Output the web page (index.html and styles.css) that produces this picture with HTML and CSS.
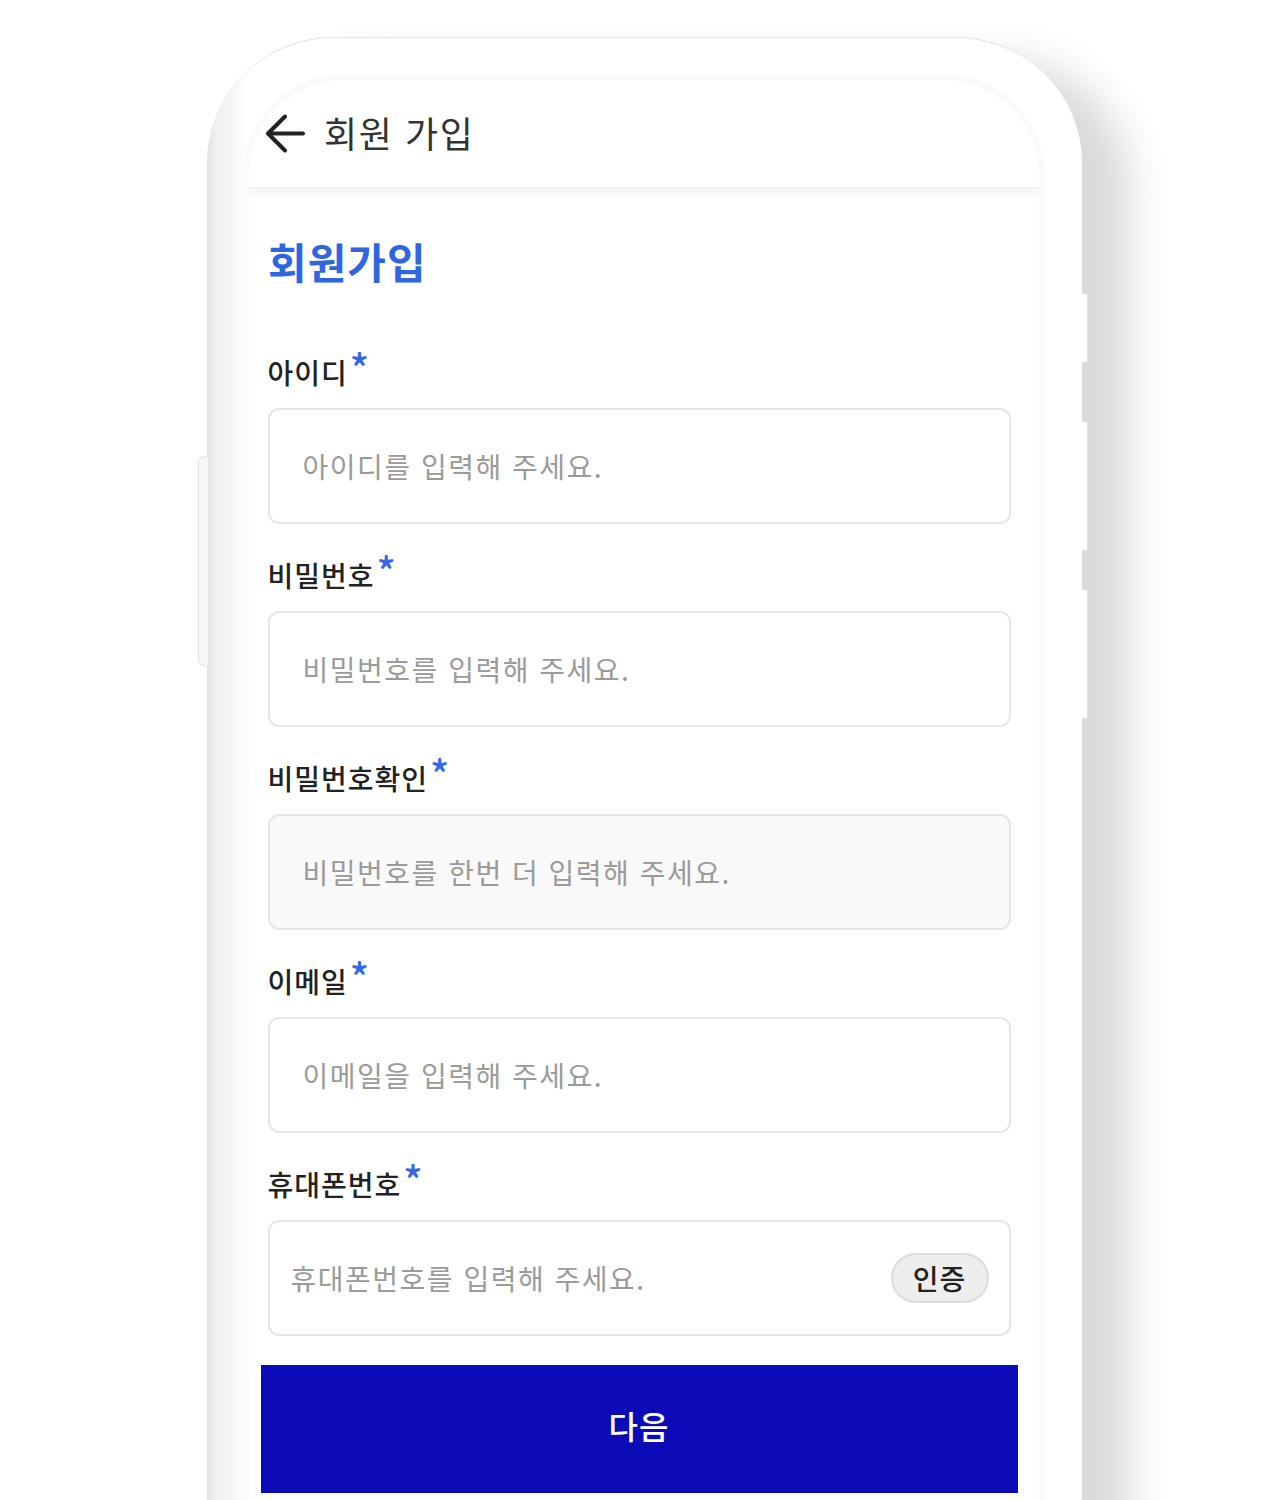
FILE: index.html
```html
<!DOCTYPE html>
<html lang="ko">
<head>
    <meta charset="UTF-8">
    <meta name="viewport" content="width=device-width, initial-scale=1.0">
    <title>회원 가입</title>
    <link rel="stylesheet" href="styles.css">
</head>
<body>
    <div class="phone">
        <span class="side-btn left-btn"></span>
        <span class="side-btn right-btn btn-1"></span>
        <span class="side-btn right-btn btn-2"></span>
        <span class="side-btn right-btn btn-3"></span>

        <div class="screen">
            <header class="app-header">
                <button class="back-btn" aria-label="뒤로">
                    <svg width="40" height="40" viewBox="0 0 40 40" fill="none" stroke="#222" stroke-width="4" stroke-linecap="round" stroke-linejoin="round">
                        <path d="M37 19.5H3"/>
                        <path d="M19 2.5L2 19.5L19 36.5"/>
                    </svg>
                </button>
                <h1>회원 가입</h1>
            </header>

            <main class="content">
                <h2 class="page-title">회원가입</h2>

                <form class="signup-form">
                    <div class="field">
                        <label for="userid">아이디<span class="req">*</span></label>
                        <input type="text" id="userid" class="text-input" placeholder="아이디를 입력해 주세요.">
                    </div>
                    <div class="field">
                        <label for="pw">비밀번호<span class="req">*</span></label>
                        <input type="password" id="pw" class="text-input" placeholder="비밀번호를 입력해 주세요.">
                    </div>
                    <div class="field">
                        <label for="pw2">비밀번호확인<span class="req">*</span></label>
                        <input type="password" id="pw2" class="text-input filled" placeholder="비밀번호를 한번 더 입력해 주세요.">
                    </div>
                    <div class="field">
                        <label for="email">이메일<span class="req">*</span></label>
                        <input type="email" id="email" class="text-input" placeholder="이메일을 입력해 주세요.">
                    </div>
                    <div class="field">
                        <label for="phone">휴대폰번호<span class="req">*</span></label>
                        <div class="input-group">
                            <input type="tel" id="phone" placeholder="휴대폰번호를 입력해 주세요.">
                            <button type="button" class="verify-btn">인증</button>
                        </div>
                    </div>
                    <button type="button" class="next-btn">다음</button>
                </form>
            </main>
        </div>
    </div>
</body>
</html>
```

FILE: styles.css
```css
* {
    box-sizing: border-box;
    margin: 0;
    padding: 0;
}

body {
    font-family: "Noto Sans CJK KR", "Noto Sans", sans-serif;
    background-color: #fff;
    color: #222;
    overflow: hidden;
    height: 1500px;
}

.phone {
    position: relative;
    width: 875px;
    height: 1520px;
    margin: 37px 0 0 207px;
    padding: 42px 0 0 42px;
    border-radius: 126px 126px 0 0;
    border-top: 1px solid #e2e2e2;
    background: linear-gradient(to right, #e2e2e2 0, #efefef 8px, #f6f6f6 26px, #fff 40px, #fff 100%);
    box-shadow: 48px 24px 40px rgba(0, 0, 0, 0.15);
}

.side-btn {
    position: absolute;
    background-color: #f6f6f6;
    border: 1px solid #e4e4e4;
}

.left-btn {
    left: -9px;
    top: 418px;
    width: 10px;
    height: 210px;
    border-radius: 6px 0 0 6px;
    border-right: none;
}

.right-btn {
    right: -6px;
    width: 6px;
    border-radius: 0 3px 3px 0;
    border-left: none;
    background-color: #fff;
}

.btn-1 {
    top: 255px;
    height: 70px;
}

.btn-2 {
    top: 383px;
    height: 130px;
}

.btn-3 {
    top: 551px;
    height: 130px;
}

.screen {
    width: 790px;
    height: 1500px;
    border-radius: 96px 96px 0 0;
    background-color: #fff;
    box-shadow: 0 0 0 6px #fafafa;
    overflow: hidden;
}

.app-header {
    display: flex;
    align-items: center;
    height: 108px;
    padding-left: 17px;
    background-color: #fff;
    box-shadow: 0 4px 8px rgba(0, 0, 0, 0.07);
    border-bottom: 1px solid #eee;
}

.back-btn {
    display: flex;
    border: none;
    background: none;
    margin-right: 18px;
}

.app-header h1 {
    font-size: 36px;
    font-weight: 400;
    color: #333;
    line-height: 1;
    letter-spacing: 1.6px;
    margin-top: -4px;
}

.content {
    padding: 48px 0 0;
}

.page-title {
    margin-left: 19px;
    font-size: 42px;
    line-height: 50px;
    font-weight: 700;
    letter-spacing: 1px;
    color: #2f66df;
}

.signup-form {
    display: flex;
    flex-direction: column;
    align-items: center;
    margin-top: 68px;
    padding-right: 10px;
}

.field {
    width: 743px;
    margin-bottom: 33px;
}

.field label {
    display: block;
    height: 36px;
    margin-bottom: 18px;
    font-size: 28px;
    line-height: 36px;
    font-weight: 500;
    letter-spacing: 1px;
    color: #222;
}

.req {
    display: inline-block;
    margin-left: 2px;
    color: #3568e4;
    font-size: 40px;
    line-height: 1;
    vertical-align: top;
    position: relative;
    top: -7px;
}

.text-input,
.input-group {
    width: 100%;
    height: 116px;
    border: 2px solid #e6e6e6;
    border-radius: 11px;
    background-color: #fff;
}

.text-input {
    padding-left: 33px;
    font-family: inherit;
    font-size: 28px;
    letter-spacing: 1.5px;
    color: #222;
    outline: none;
}

.text-input.filled {
    background-color: #f9f9f9;
}

.input-group {
    display: flex;
    align-items: center;
    padding: 0 20px 0 21px;
}

.input-group input {
    flex: 1;
    border: none;
    outline: none;
    background: none;
    font-family: inherit;
    font-size: 28px;
    letter-spacing: 1.5px;
}

::placeholder {
    color: #9a9a9a;
    opacity: 1;
}

.verify-btn {
    width: 98px;
    height: 50px;
    border: 2px solid #dcdcdc;
    border-radius: 25px;
    background-color: #eee;
    font-family: inherit;
    font-size: 28px;
    font-weight: 500;
    letter-spacing: 1px;
    color: #222;
}

.next-btn {
    width: 757px;
    height: 128px;
    margin-top: -4px;
    padding-bottom: 8px;
    border: none;
    background-color: #0c0bb8;
    font-family: inherit;
    font-size: 32px;
    font-weight: 500;
    letter-spacing: 1px;
    color: #fff;
}
```
